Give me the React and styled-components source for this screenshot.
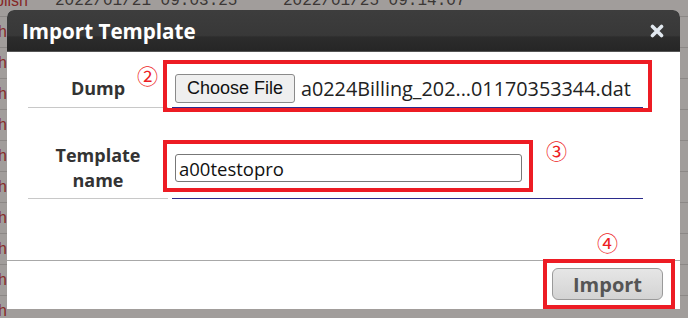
import React from "react";
import styled, { createGlobalStyle } from "styled-components";

const GlobalStyle = createGlobalStyle`
  html, body {
    margin: 0;
    padding: 0;
  }
  body {
    width: 688px;
    height: 318px;
    overflow: hidden;
    background: #fff;
    font-family: "Open Sans", "DejaVu Sans", sans-serif;
  }
`;

const Screen = styled.div`
  position: relative;
  width: 688px;
  height: 318px;
  overflow: hidden;
`;

const PageTable = styled.div`
  display: flex;
  flex-direction: column;
  margin-top: -14px;
`;

const PageRow = styled.div`
  display: grid;
  grid-template-columns: 55px 228px 1fr;
  height: 30px;
  align-items: center;
  border-bottom: 1px solid #dcdcdc;
  font-family: "Liberation Mono", monospace;
  font-size: 16px;
  color: #555;
  white-space: nowrap;
  overflow: hidden;
`;

const RedCell = styled.span`
  color: #d23c3c;
  font-family: "Liberation Sans", sans-serif;
  display: flex;
  justify-content: flex-end;
  overflow: hidden;
  width: ${(p) => p.$w}px;
`;

const Overlay = styled.div`
  position: absolute;
  inset: 0;
  background: rgba(20, 10, 5, 0.4);
`;

const Dialog = styled.div`
  position: absolute;
  left: 7px;
  top: 10px;
  width: 673px;
  height: 299px;
  display: flex;
  flex-direction: column;
  background: #fff;
  border-radius: 7px 7px 0 0;
`;

const TitleBar = styled.div`
  height: 42px;
  display: flex;
  align-items: center;
  justify-content: space-between;
  padding: 0 16px 0 15px;
  border-radius: 7px 7px 0 0;
  background: linear-gradient(#3d3d3d 0%, #383838 62%, #2c2c2c 66%, #262626 100%);
  border-bottom: 1px solid #555;
  box-sizing: border-box;
`;

const Title = styled.h1`
  margin: 0;
  font-size: 20.6px;
  font-weight: 700;
  color: #fff;
`;

const CloseButton = styled.button`
  width: 14px;
  height: 14px;
  padding: 0;
  border: 0;
  background: none;
  display: flex;
`;

const Body = styled.div`
  height: 209px;
  box-sizing: border-box;
  padding: 18px 0 0 21px;
  border-bottom: 1px solid #a8a8a8;
`;

const Form = styled.div`
  display: grid;
  grid-template-columns: 140px 471px;
  column-gap: 4px;
  row-gap: 30px;
`;

const Label = styled.div`
  height: ${(p) => p.$h}px;
  display: flex;
  align-items: center;
  justify-content: center;
  text-align: center;
  font-size: 18px;
  font-weight: 700;
  line-height: 25px;
  color: #333;
  border-bottom: 1px solid #c8c8c8;
`;

const Field = styled.div`
  height: ${(p) => p.$h}px;
  display: flex;
  align-items: center;
  gap: 6px;
  padding-left: 3px;
  border-bottom: 1px solid #2b2b8c;
`;

const FileButton = styled.button`
  width: 120px;
  height: 29px;
  padding: 0;
  border: 1px solid #8a8a8a;
  border-radius: 3px;
  background: #efefef;
  font-family: "Liberation Sans", Arial, sans-serif;
  font-size: 18px;
  color: #111;
`;

const FileName = styled.span`
  font-size: 19.8px;
  color: #222;
  white-space: nowrap;
`;

const TextInput = styled.input`
  width: 347px;
  height: 28px;
  box-sizing: border-box;
  padding: 0 3px;
  border: 1px solid #777;
  border-radius: 3px;
  font-family: "Open Sans", sans-serif;
  font-size: 18.5px;
  color: #111;
`;

const Footer = styled.div`
  flex: 1;
  display: flex;
  align-items: center;
  justify-content: flex-end;
  padding: 0 17px 2px 0;
`;

const ImportButton = styled.button`
  width: 111px;
  height: 32px;
  border: 1px solid #9a9a9a;
  border-radius: 6px;
  background: linear-gradient(#e6e6e6, #d3d3d3);
  font-family: "Open Sans", sans-serif;
  font-size: 20px;
  font-weight: 700;
  color: #555;
`;

const Highlight = styled.div`
  position: absolute;
  left: ${(p) => p.$x}px;
  top: ${(p) => p.$y}px;
  width: ${(p) => p.$w}px;
  height: ${(p) => p.$h}px;
  box-sizing: border-box;
  border: 4px solid #ed1c24;
  pointer-events: none;
`;

const Marker = styled.span`
  position: absolute;
  left: ${(p) => p.$x}px;
  top: ${(p) => p.$y}px;
  font-family: "Noto Sans CJK JP", sans-serif;
  font-size: 21px;
  line-height: 1;
  color: #ed1c24;
`;

const rows = [
  ["Publish", "2022/01/21 09:03:25", "2022/01/25 09:14:07"],
  ["Publish", "", ""],
  ["Publish", "", ""],
  ["Publish", "", ""],
  ["Publish", "", ""],
  ["Publish", "", ""],
  ["Publish", "", ""],
  ["Publish", "", ""],
  ["Publish", "", ""],
  ["Publish", "", ""],
  ["Publish", "", ""],
];

export default function App() {
  return (
    <Screen>
      <GlobalStyle />
      <PageTable>
        {rows.map((r, i) => (
          <PageRow key={i}>
            <RedCell $w={i === 0 ? 28 : 7}>{r[0]}</RedCell>
            <span>{r[1]}</span>
            <span>{r[2]}</span>
          </PageRow>
        ))}
      </PageTable>
      <Overlay />
      <Dialog>
        <TitleBar>
          <Title>Import Template</Title>
          <CloseButton aria-label="close">
            <svg width="14" height="14" viewBox="0 0 14 14">
              <path
                d="M2.5 2.5 L11.5 11.5 M11.5 2.5 L2.5 11.5"
                stroke="#e2e9f0"
                strokeWidth="3.6"
                strokeLinecap="round"
              />
            </svg>
          </CloseButton>
        </TitleBar>
        <Body>
          <Form>
            <Label $h={37}>Dump</Label>
            <Field $h={37}>
              <FileButton>Choose File</FileButton>
              <FileName>a0224Billing_202...01170353344.dat</FileName>
            </Field>
            <Label $h={60}>
              Template
              <br />
              name
            </Label>
            <Field $h={60}>
              <TextInput defaultValue="a00testopro" />
            </Field>
          </Form>
        </Body>
        <Footer>
          <ImportButton>Import</ImportButton>
        </Footer>

        <Highlight $x={156} $y={50} $w={489} $h={52}>
          <Marker $x={-30} $y={1}>②</Marker>
        </Highlight>
        <Highlight $x={156} $y={130} $w={370} $h={52}>
          <Marker $x={379} $y={-4}>③</Marker>
        </Highlight>
        <Highlight $x={536} $y={249} $w={132} $h={50}>
          <Marker $x={50} $y={-31}>④</Marker>
        </Highlight>
      </Dialog>
    </Screen>
  );
}
